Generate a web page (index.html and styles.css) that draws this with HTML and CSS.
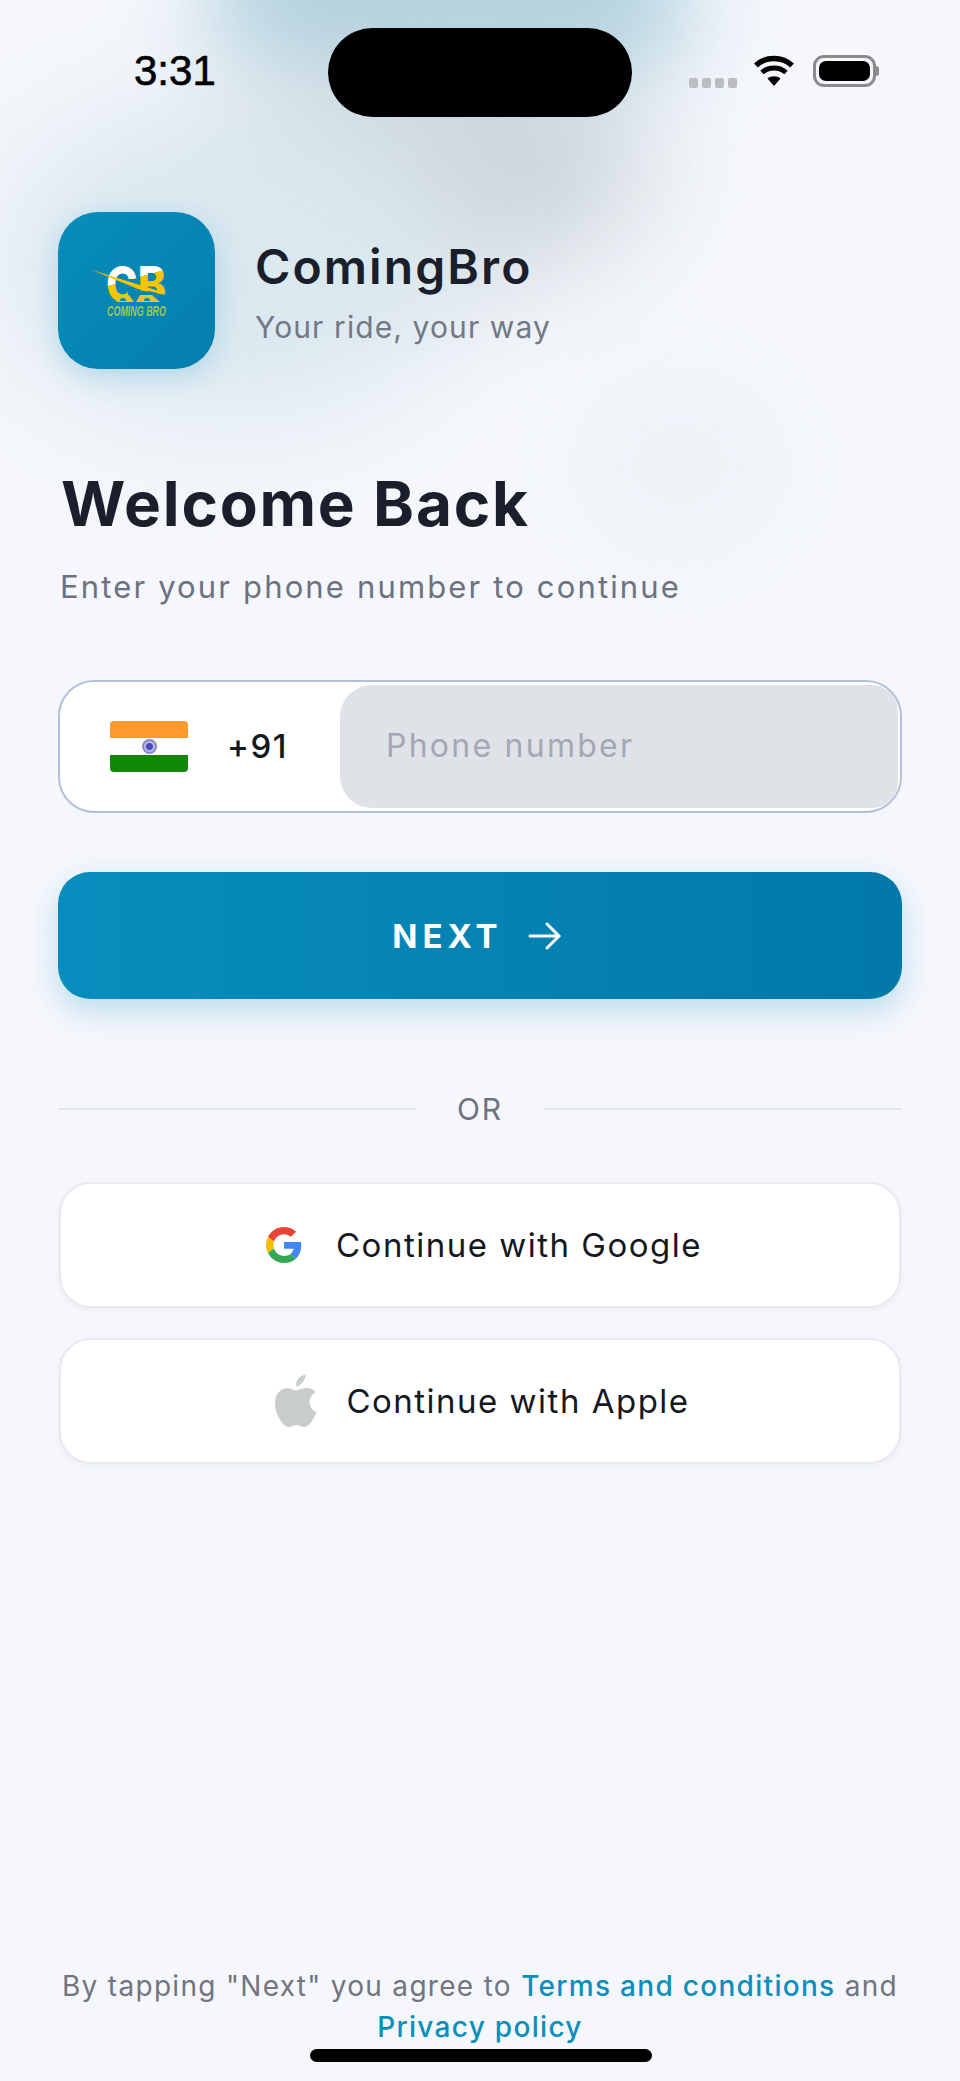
FILE: index.html
```html
<!DOCTYPE html>
<html lang="en">
<head>
    <meta charset="UTF-8">
    <meta name="viewport" content="width=device-width, initial-scale=1.0">
    <title>ComingBro Login</title>
    <link rel="stylesheet" href="styles.css">
</head>
<body>
    <div class="screen">
        <!-- blurred background blobs -->
        <div class="blob blob-top"></div>
        <div class="blob blob-grey"></div>
        <div class="blob blob-logo"></div>
        <div class="blob blob-mid"></div>

        <div class="status-bar">
            <span class="time">3:31</span>
            <div class="status-icons">
                <div class="signal"><i></i><i></i><i></i><i></i></div>
                <svg class="wifi" width="42" height="32" viewBox="0 0 42 32">
                    <path d="M21 31 L14.5 23.5 C18 20.5 24 20.5 27.5 23.5 Z" fill="#000"/>
                    <path d="M9 17.5 C15.5 11.5 26.5 11.5 33 17.5" fill="none" stroke="#000" stroke-width="5"/>
                    <path d="M3 10.5 C12.5 1 29.5 1 39 10.5" fill="none" stroke="#000" stroke-width="5.5"/>
                </svg>
                <div class="battery"><div class="battery-fill"></div></div>
                <div class="battery-cap"></div>
            </div>
        </div>
        <div class="island"></div>

        <div class="brand">
            <div class="logo">
                <svg width="76" height="56" viewBox="0 0 76 56">
                    <defs>
                        <linearGradient id="cbFill" gradientUnits="userSpaceOnUse" x1="31" y1="10" x2="35" y2="24">
                            <stop offset="50%" stop-color="#fff"/>
                            <stop offset="50%" stop-color="#f6c500"/>
                        </linearGradient>
                    </defs>
                    <text class="logo-cb" x="14" y="38" textLength="60" lengthAdjust="spacingAndGlyphs" fill="url(#cbFill)">CB</text>
                    <path d="M36 24 L74 31 L74 39 L36 39 Z" fill="#0684b4"/>
                    <path d="M24 38 L28 31 L37 31 L42 38 Z M44 38 L48 31 L60 31 L68 38 Z" fill="#e2c62c"/>
                    <path d="M28 37 a3 3 0 0 1 6 0 Z M52 37 a3 3 0 0 1 6 0 Z" fill="#0684b4"/>
                    <path d="M0 6 L67 27 L66 29 L46 25 Z" fill="#f6c500"/>
                    <text class="logo-sub" x="15" y="52" textLength="59" lengthAdjust="spacingAndGlyphs">COMING BRO</text>
                </svg>
            </div>
            <div class="brand-text">
                <h1>ComingBro</h1>
                <p>Your ride, your way</p>
            </div>
        </div>

        <h2>Welcome Back</h2>
        <p class="subtitle">Enter your phone number to continue</p>

        <div class="phone-box">
            <div class="country">
                <div class="flag">
                    <div class="flag-orange"></div>
                    <div class="flag-white"><span class="chakra"></span></div>
                    <div class="flag-green"></div>
                </div>
                <span class="code">+91</span>
            </div>
            <div class="phone-input">Phone number</div>
        </div>

        <button class="next-btn">
            <span>NEXT</span>
            <svg width="34" height="30" viewBox="0 0 34 30" fill="none" stroke="#fff" stroke-width="3" stroke-linecap="round" stroke-linejoin="round">
                <path d="M2 15 H31"/>
                <path d="M19 3 L31 15 L19 27"/>
            </svg>
        </button>

        <div class="divider">
            <div class="line"></div>
            <span>OR</span>
            <div class="line"></div>
        </div>

        <button class="social-btn google-btn">
            <svg width="36" height="36" viewBox="0 0 48 48">
                <path fill="#EA4335" d="M24 9.5c3.5 0 6.7 1.2 9.2 3.6l6.9-6.9C35.9 2.4 30.5 0 24 0 14.6 0 6.5 5.4 2.6 13.2l8 6.2C12.4 13.7 17.700 9.500 24 9.500z"/>
                <path fill="#4285F4" d="M47 24.500c0-1.600-.1-3.100-.4-4.500H24v9h12.900c-.6 3-2.200 5.500-4.700 7.200l7.700 6C44.400 37.900 47 31.800 47 24.500z"/>
                <path fill="#FBBC05" d="M10.600 28.600c-.5-1.400-.7-3-.7-4.600s.3-3.200.7-4.600l-8-6.200C.9 16.500 0 20.100 0 24s.9 7.500 2.600 10.800l8-6.200z"/>
                <path fill="#34A853" d="M24 48c6.500 0 11.900-2.100 15.900-5.800l-7.700-6c-2.200 1.400-4.900 2.300-8.200 2.300-6.300 0-11.600-4.200-13.400-9.900l-8 6.200C6.500 42.600 14.600 48 24 48z"/>
            </svg>
            <span>Continue with Google</span>
        </button>

        <button class="social-btn apple-btn">
            <svg width="44" height="56" viewBox="0 0 44 56">
                <path fill="#c9cccd" d="M23 14c4-3 8-6 9-12.500-1 0-5 1-8 4.500-2 2.500-2.500 5.500-1 8z"/>
                <path fill="#c9cccd" d="M31 15c-4 0-6.500 2.500-9 2.500S17 15 13 15C7 15.500 1 20.500 1 30c0 11 8 24 14 24 3 0 4-2 7.500-2s4.500 2 7.500 2c5 0 10-8 12.500-15-4-1.500-7-5-7-10 0-4.500 2.500-7.500 6-10-3-4-7.500-4-11.500-4z"/>
            </svg>
            <span>Continue with Apple</span>
        </button>

        <div class="footer">
            By tapping "Next" you agree to <a href="#">Terms and conditions</a> and<br>
            <a href="#">Privacy policy</a>
        </div>
        <div class="home-bar"></div>
    </div>
</body>
</html>
```

FILE: styles.css
```css
* {
    box-sizing: border-box;
}

body {
    margin: 0;
    font-family: 'Inter', sans-serif;
    background: #f5f7fc;
}

.screen {
    position: relative;
    width: 960px;
    height: 2081px;
    padding: 0 58px;
    overflow: hidden;
    background: #f5f7fc;
}

.blob {
    position: absolute;
    border-radius: 50%;
}

.blob-logo {
    top: 100px;
    left: 0;
    width: 460px;
    height: 320px;
    background: #dae8ef;
    filter: blur(55px);
}

.blob-top {
    top: -120px;
    left: 205px;
    width: 490px;
    height: 240px;
    background: #b3d3e0;
    filter: blur(45px);
}

.blob-grey {
    top: 50px;
    left: 230px;
    width: 420px;
    height: 230px;
    background: #ccd6dc;
    filter: blur(55px);
}

.blob-mid {
    top: 380px;
    left: 580px;
    width: 200px;
    height: 170px;
    background: #edf3f8;
    filter: blur(40px);
}

.status-bar {
    position: relative;
    display: flex;
    justify-content: space-between;
    height: 212px;
    padding: 49px 0 0 76px;
}

.time {
    font-family: 'Liberation Sans', sans-serif;
    font-size: 42px;
    line-height: 44px;
    font-weight: 400;
    color: #000;
    -webkit-text-stroke: 0.6px #000;
}

.status-icons {
    display: flex;
    align-items: flex-start;
    margin-right: 23px;
    height: 40px;
    margin-top: 6px;
}

.signal {
    display: flex;
    gap: 4px;
    margin: 23px 16px 0 0;
}

.signal i {
    width: 9px;
    height: 10px;
    border-radius: 2px;
    background: #bcbdc0;
}

.wifi {
    margin: 0 18px 0 0;
}

.battery {
    width: 63px;
    height: 32px;
    border: 3px solid #8b8b8b;
    border-radius: 11px;
    padding: 3px;
}

.battery-fill {
    height: 100%;
    background: #000;
    border-radius: 7px;
}

.battery-cap {
    width: 3px;
    height: 10px;
    margin-top: 11px;
    background: #8b8b8b;
    border-radius: 0 3px 3px 0;
}

.island {
    position: absolute;
    top: 28px;
    left: 328px;
    width: 304px;
    height: 89px;
    background: #000;
    border-radius: 45px;
}

.brand {
    position: relative;
    display: flex;
    align-items: center;
    gap: 40px;
}

.logo {
    display: flex;
    align-items: center;
    justify-content: center;
    width: 157px;
    height: 157px;
    border-radius: 40px;
    background: linear-gradient(135deg, #088dbc, #047ead);
    box-shadow: 0 8px 28px rgba(10, 143, 189, 0.22);
}

.logo svg {
    margin: 2px 13px 0 0;
    overflow: visible;
}

.logo-cb {
    font-family: 'Inter', sans-serif;
    font-size: 50px;
    font-weight: 800;
}

.logo-sub {
    font-family: 'Liberation Sans', sans-serif;
    font-size: 15px;
    font-weight: 700;
    font-style: italic;
    fill: #9ec84a;
}

.brand-text {
    padding-top: 3px;
}

.brand-text h1 {
    margin: 0;
    font-size: 48px;
    line-height: 54px;
    font-weight: 600;
    letter-spacing: 2.1px;
    color: #1a1f2b;
}

.brand-text p {
    margin: 15px 0 0;
    font-size: 30px;
    line-height: 36px;
    letter-spacing: 1.1px;
    color: #727885;
}

h2 {
    position: relative;
    margin: 99px 0 0 3px;
    font-size: 62px;
    line-height: 72px;
    font-weight: 700;
    letter-spacing: 1.8px;
    color: #1a1f2b;
}

.subtitle {
    position: relative;
    margin: 29px 0 0 2px;
    font-size: 31px;
    line-height: 36px;
    letter-spacing: 2.15px;
    color: #6c7280;
}

.phone-box {
    position: relative;
    display: flex;
    height: 133px;
    margin-top: 75px;
    padding: 3px 2px 3px 3px;
    background: #fff;
    border: 2px solid #b4c0da;
    border-radius: 36px;
}

.country {
    display: flex;
    align-items: center;
    width: 277px;
    padding-left: 47px;
    gap: 39px;
}

.flag {
    display: flex;
    flex-direction: column;
    width: 78px;
    height: 51px;
    border-radius: 4px;
    overflow: hidden;
}

.flag-orange,
.flag-green,
.flag-white {
    flex: 1;
}

.flag-orange {
    background: #ff9a2f;
}

.flag-white {
    display: flex;
    align-items: center;
    justify-content: center;
    background: #fff;
}

.flag-green {
    background: #128807;
}

.chakra {
    width: 15px;
    height: 15px;
    border-radius: 50%;
    background: radial-gradient(circle, #4a4ab8 0 3px, #b9b9e6 4px 5px, #8686cc 6px);
}

.code {
    font-size: 33px;
    font-weight: 500;
    line-height: 36px;
    letter-spacing: 1.5px;
    color: #14181f;
    margin-top: -2px;
}

.phone-input {
    flex: 1;
    display: flex;
    align-items: center;
    padding: 0 0 2px 46px;
    font-size: 32px;
    letter-spacing: 2.25px;
    color: #a3a8b4;
    background: #dfe2e6;
    border-radius: 32px 26px 26px 32px;
}

.next-btn {
    position: relative;
    display: flex;
    align-items: center;
    justify-content: center;
    gap: 25px;
    width: 100%;
    height: 127px;
    margin-top: 59px;
    padding: 0 6px 0 0;
    color: #fff;
    font-family: inherit;
    font-size: 33px;
    font-weight: 700;
    letter-spacing: 5px;
    border: none;
    border-radius: 32px;
    background: linear-gradient(90deg, #078dbd, #0279a8);
    box-shadow: 0 12px 30px rgba(10, 143, 189, 0.25);
}

.divider {
    position: relative;
    display: flex;
    align-items: center;
    gap: 40px;
    margin-top: 92px;
    height: 36px;
    font-size: 30px;
    font-weight: 400;
    letter-spacing: 2px;
    color: #6c7280;
}

.line {
    flex: 1;
    height: 2px;
    background: #e3e6ec;
}

.social-btn {
    position: relative;
    display: flex;
    align-items: center;
    justify-content: center;
    width: calc(100% - 2px);
    height: 126px;
    margin-left: 1px;
    font-family: inherit;
    font-size: 33px;
    letter-spacing: 1.5px;
    color: #14181f;
    background: #fff;
    border: 2px solid #e8eaef;
    border-radius: 32px;
    box-shadow: 0 2px 6px rgba(20, 30, 50, 0.05);
}

.google-btn {
    gap: 34px;
    margin-top: 55px;
    padding: 0 0 0 8px;
}

.apple-btn {
    gap: 28px;
    margin-top: 30px;
    padding: 0 0 0 4px;
}

.footer {
    position: absolute;
    left: 0;
    right: 0;
    top: 1966px;
    text-align: center;
    font-size: 28px;
    line-height: 41px;
    letter-spacing: 1.3px;
    color: #72757f;
}

.footer a {
    color: #0a8fbd;
    text-decoration: none;
    font-weight: 500;
}

.home-bar {
    position: absolute;
    left: 310px;
    top: 2049px;
    width: 342px;
    height: 13px;
    background: #000;
    border-radius: 7px;
}
```
